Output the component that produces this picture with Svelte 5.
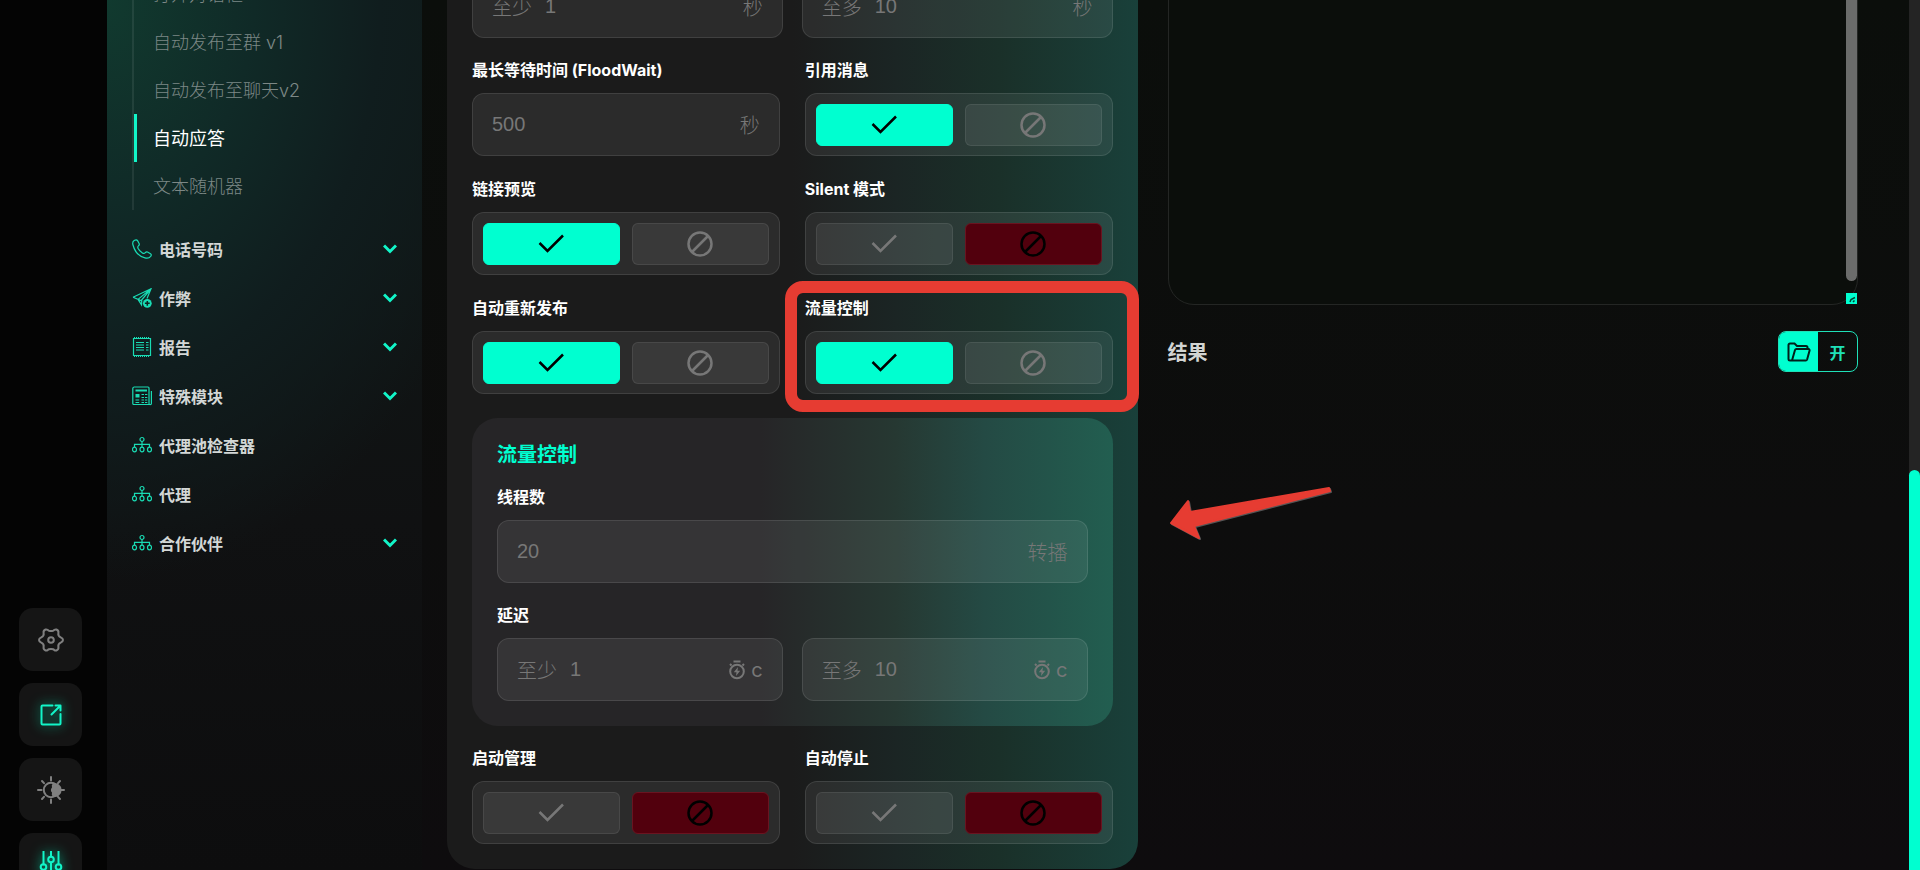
<script lang="ts">
  type Toggle = { id: string; label: string; on: boolean; marked?: boolean };

  const subItems = ['打开对话框', '自动发布至群 v1', '自动发布至聊天v2', '自动应答', '文本随机器'];
  let activeSub = $state(3);

  const menu = [
    { label: '电话号码', icon: 'phone', more: true },
    { label: '作弊', icon: 'plane', more: true },
    { label: '报告', icon: 'report', more: true },
    { label: '特殊模块', icon: 'news', more: true },
    { label: '代理池检查器', icon: 'tree', more: false },
    { label: '代理', icon: 'tree', more: false },
    { label: '合作伙伴', icon: 'tree', more: true },
  ];

  let floodWait = $state('500');
  let threads = $state('20');
  let log = $state('');

  let quote: Toggle = $state({ id: 'quote', label: '引用消息', on: true });
  let options: Toggle[] = $state([
    { id: 'preview', label: '链接预览', on: true },
    { id: 'silent', label: 'Silent 模式', on: false },
    { id: 'repost', label: '自动重新发布', on: true },
    { id: 'flow', label: '流量控制', on: true, marked: true },
  ]);
  let launch: Toggle[] = $state([
    { id: 'manage', label: '启动管理', on: false },
    { id: 'autostop', label: '自动停止', on: false },
  ]);
</script>

{#snippet menuIcon(name: string)}
  <svg class="menu-icon" viewBox="0 0 20 20" aria-hidden="true">
    {#if name === 'phone'}
      <path d="M2.2 1.5C.8 2.300.4 4 1 6c1.600 6 6 11.400 12 12.900 2.300.6 4.300.2 5.700-1.500.9-1.200.7-2-.2-2.600l-3-1.800c-.9-.5-1.500-.3-2.200.6-.8 1-1.700 1.100-2.900.3C8.300 12.600 6.800 10.900 6 9.200c-.5-1.200-.2-1.900.6-2.600.8-.6.9-1.300.5-2.100L5.700 1.900C5 .8 3.600.7 2.200 1.500z" />
    {:else if name === 'plane'}
      <path d="M1 9.200 19 .8l-4 9.700M1 9.200l5 2.200L19 .8 9.200 12.500M6 11.400l3.500 5.400.3-4.300M6.500 11.400l3 1.600" />
      <circle class="fill" cx="15.300" cy="15.300" r="4.400" />
      <path class="cut" d="M15.300 12.900v4.800M12.900 15.300h4.800" />
    {:else if name === 'report'}
      <path d="M1.500 1.500h17v17h-17z" />
      <path stroke-dasharray="1 1" stroke-width="2" d="M2 1h16M2 19h16" />
      <path d="M4 5.500h8M4 8h8M4 10.500h8M4 13h8M14 5.500h2.500M14 8h2.500M14 10.500h2.500M14 13h2.500" />
    {:else if name === 'news'}
      <path d="M2.500 1h13.500a1 1 0 0 1 1 1v15.500c0 1.500 2.400 1.500 2.400 0V5M17 18.500H1.800a1 1 0 0 1-1-1V2.500A1.500 1.500 0 0 1 2.500 1" />
      <path stroke-width="2" d="M3.500 4.500h11.500" />
      <path class="fill" d="M3.500 8h4v3.500h-4z" />
      <path d="M9.500 8.500H12M13 8.500h2.300M9.500 11.500H12M13 11.500h2.300M3.500 14h3.700M9.500 14H12M13 14h2.300M3.500 16.500h3.700M9.500 16.500H12M13 16.500h2.300" />
    {:else}
      <circle cx="10" cy="4.500" r="2" />
      <path d="M10 6.500v5.500M2.500 12V9.300h15V12" />
      <ellipse cx="2.500" cy="14.500" rx="2" ry="2.300" />
      <ellipse cx="10" cy="14.500" rx="2" ry="2.300" />
      <ellipse cx="17.500" cy="14.500" rx="2" ry="2.300" />
    {/if}
  </svg>
{/snippet}

{#snippet toggle(item: Toggle)}
  <div class="field" class:marked={item.marked}>
    <span class="label" id="{item.id}-label">{item.label}</span>
    <div class="toggle" role="group" aria-labelledby="{item.id}-label">
      <button type="button" class="yes" class:selected={item.on} aria-label="开启" aria-pressed={item.on} onclick={() => (item.on = true)}>
        <svg width="28" height="28" viewBox="0 0 28 28"><path d="m2.500 13 8 8L26 5.500" /></svg>
      </button>
      <button type="button" class="no" class:selected={!item.on} aria-label="关闭" aria-pressed={!item.on} onclick={() => (item.on = false)}>
        <svg width="28" height="28" viewBox="0 0 28 28"><circle cx="14" cy="14" r="11.500" /><path d="m6 22 16-16" /></svg>
      </button>
    </div>
  </div>
{/snippet}

{#snippet range(id: string, timer: boolean)}
  <div class="range">
    {#each [['至少', '1'], ['至多', '10']] as [prefix, value], i}
      <div class="box">
        <label for="{id}-{i}">{prefix}</label>
        <input id="{id}-{i}" type="text" {value} />
        {#if timer}
          <svg class="timer" width="18" height="20" viewBox="0 0 18 20" aria-hidden="true">
            <path d="M5.500 1.500h7M2 4l1.500 1.500M16 4l-1.500 1.500" />
            <circle cx="9" cy="11.500" r="6.800" />
            <path class="bolt" d="M10 7 5.800 12.300h2.700L8 16l4.200-5.200H9.500z" />
          </svg>
          <span class="unit latin">c</span>
        {:else}
          <span class="unit">秒</span>
        {/if}
      </div>
    {/each}
  </div>
{/snippet}

<div class="app">
  <aside class="rail">
    <button type="button" aria-label="设置">
      <svg width="28" height="28" viewBox="0 0 28 28">
        <path d="M8.600 3.500c1.800-.5 2 .9 3.300 1.300 1.600.3 2.600.3 4.200 0 1.300-.4 1.500-1.800 3.300-1.300 2 .8 2.400 1.500 2 3.500-.4 1.800.5 3.600 2.300 4.400 2 1 2.300 1.500 2.300 2.600s-.3 1.600-2.300 2.600c-1.800.8-2.700 2.600-2.300 4.400.4 2 0 2.700-2 3.500-1.800.5-2-.9-3.300-1.300-1.600-.3-2.600-.3-4.200 0-1.300.4-1.500 1.800-3.300 1.300-2-.8-2.400-1.500-2-3.500.4-1.800-.5-3.600-2.300-4.400-2-1-2.300-1.500-2.300-2.600s.3-1.600 2.300-2.600C6.100 10.600 7 8.800 6.600 7c-.4-2 0-2.700 2-3.500z" />
        <circle cx="14" cy="14" r="2.800" />
      </svg>
    </button>
    <button type="button" class="lit" aria-label="打开">
      <svg width="28" height="28" viewBox="0 0 28 28"><path d="M15.500 4.500h-10a1 1 0 0 0-1 1v17a1 1 0 0 0 1 1h17a1 1 0 0 0 1-1V13M14.500 13.500l9-9M18.500 4.500h5v5" /></svg>
    </button>
    <button type="button" aria-label="主题">
      <svg width="28" height="28" viewBox="0 0 28 28">
        <circle cx="14" cy="14" r="7.200" />
        <path class="fill" d="M16 7.200a7 7 0 1 1 0 13.600 4 4 0 0 1-1-4.200 4 4 0 0 1 0-5.200 4 4 0 0 1 1-4.200z" />
        <path d="M14 1v3.500M14 23.500V27M1 14h3.500M23.500 14H27M5 5l2 2.200M23 5l-2 2.200M5 23l2-2.200M23 23l-2-2.200" />
      </svg>
    </button>
    <button type="button" class="lit" aria-label="筛选">
      <svg width="28" height="28" viewBox="0 0 28 28"><path d="M6.500 0v13.500M6.500 19.500V27M14 0v5.500M14 11.500V27M21.500 0v13.500M21.500 19.500V27" /><circle cx="6.500" cy="16" r="2.800" /><circle cx="14" cy="8.500" r="2.800" /><circle cx="21.500" cy="16" r="2.800" /></svg>
    </button>
  </aside>

  <nav class="sidebar">
    <ul class="submenu">
      {#each subItems as item, i}
        <li><a href="#sub-{i}" class:active={activeSub === i} onclick={() => (activeSub = i)}>{item}</a></li>
      {/each}
    </ul>
    <ul class="menu">
      {#each menu as item}
        <li>
          <a href="#menu">
            {@render menuIcon(item.icon)}
            <span>{item.label}</span>
            {#if item.more}
              <svg class="chevron" width="14" height="10" viewBox="0 0 14 10" aria-hidden="true"><path d="m1 1.500 6 6 6-6" /></svg>
            {/if}
          </a>
        </li>
      {/each}
    </ul>
  </nav>

  <main>
    <form class="card" onsubmit={(e) => e.preventDefault()}>
      {@render range('interval', false)}

      <div class="grid">
        <div class="field">
          <label class="label" for="flood">最长等待时间 (FloodWait)</label>
          <div class="box">
            <input id="flood" type="text" bind:value={floodWait} />
            <span class="unit">秒</span>
          </div>
        </div>
        {@render toggle(quote)}
        {#each options as item}
          {@render toggle(item)}
        {/each}
      </div>

      <section class="panel">
        <h2>流量控制</h2>
        <label class="label" for="threads">线程数</label>
        <div class="box">
          <input id="threads" type="text" bind:value={threads} />
          <span class="unit">转播</span>
        </div>
        <span class="label delay">延迟</span>
        {@render range('delay', true)}

        <svg class="arrow" width="166" height="56" viewBox="0 0 166 56" aria-hidden="true">
          <path d="M3 37 20 15l2 11L161 2l1 3L26 40l5 12z" />
        </svg>
      </section>

      <div class="grid">
        {#each launch as item}
          {@render toggle(item)}
        {/each}
      </div>
    </form>

    <section class="output">
      <div class="log">
        <textarea aria-label="日志" bind:value={log}></textarea>
        <i class="log-thumb"></i>
        <i class="resizer">
          <svg width="11" height="11" viewBox="0 0 11 11"><path d="m4 9 1-2.500L9 4.500M7 9l1.500-1.500" /></svg>
        </i>
      </div>
      <div class="result">
        <h2>结果</h2>
        <button type="button" class="open">
          <span class="folder">
            <svg width="24" height="20" viewBox="0 0 24 20" aria-hidden="true"><path d="M5 18.500H3A1.500 1.500 0 0 1 1.500 17V3A1.500 1.500 0 0 1 3 1.500h4.500L10 4h9a1.500 1.500 0 0 1 1.500 1.500v1M5 18.500 8 8a1.500 1.500 0 0 1 1.500-1h12A1.200 1.200 0 0 1 22.600 8.500l-2.500 9a1.500 1.500 0 0 1-1.500 1z" /></svg>
          </span>
          <span class="open-text">开</span>
        </button>
      </div>
    </section>
  </main>

  <div class="page-scroll"><i></i></div>
</div>

<style>
  :global(body) {
    background: #0d0d0d;
  }

  .app {
    --accent: #00ffd0;
    --latin: Inter, 'Noto Sans CJK SC', sans-serif;
    --body: 'Liberation Sans', 'Noto Sans CJK SC', sans-serif;
    display: flex;
    height: 100vh;
    overflow: hidden;
    color: #fff;
    font-family: var(--latin);
    background: linear-gradient(#0b0e0b, #0d0d0d 60%, #0e0c0e);
  }

  .app * { box-sizing: border-box; }
  ul { list-style: none; margin: 0; padding: 0; }
  a { color: inherit; text-decoration: none; }
  h2 { margin: 0; }
  button { padding: 0; cursor: pointer; font-family: inherit; }
  svg { fill: none; stroke: currentColor; stroke-width: 2; flex: none; }

  /* icon rail */
  .rail {
    flex: none;
    width: 107px;
    display: flex;
    flex-direction: column;
    justify-content: flex-end;
    gap: 12px;
    padding-left: 19px;
    margin-bottom: -26px;
    background: #040404;
  }
  .rail button {
    display: flex;
    align-items: center;
    justify-content: center;
    flex: none;
    width: 63px;
    height: 63px;
    border: 0;
    border-radius: 14px;
    background: #151515;
    color: #808080;
  }
  .rail svg { stroke-linecap: round; stroke-linejoin: round; }
  .rail .fill { fill: currentColor; stroke: none; }
  .rail .lit { color: #12f5c8; }
  .rail .lit svg { filter: drop-shadow(0 0 6px #00c89a); }

  /* navigation */
  .sidebar {
    flex: none;
    width: 315px;
    padding: 0 25px;
    background:
      radial-gradient(ellipse 420px 580px at 0 0, #113a2f, #102a27 35%, #101d1e 65%, transparent),
      linear-gradient(#101a19, #101112 60%, #0d0d0e);
  }
  .submenu {
    margin-top: -30px;
    border-left: 2px solid rgba(255, 255, 255, 0.08);
  }
  .submenu a {
    display: block;
    height: 48px;
    padding-left: 16px;
    border-left: 3px solid transparent;
    color: #7d8886;
    font-size: 18px;
    font-weight: 300;
    line-height: 50px;
    white-space: nowrap;
  }
  .submenu a.active {
    border-left-color: #12f5c8;
    color: #fff;
    font-weight: 400;
  }
  .menu { margin-top: 14px; }
  .menu a {
    display: flex;
    align-items: center;
    gap: 7px;
    height: 49px;
    color: #d3d7d6;
    font-size: 16px;
    font-weight: 700;
  }
  .menu span { flex: 1; }
  .menu-icon {
    width: 20px;
    height: 20px;
    color: #19dcb4;
    stroke-width: 1.2;
  }
  .menu-icon .fill { fill: currentColor; stroke: none; }
  .menu-icon .cut { stroke: #0e2522; stroke-width: 1.5; }
  .chevron { color: #12f5c8; stroke-width: 3; }

  /* main */
  main {
    flex: 1;
    min-width: 0;
    display: grid;
    grid-template-columns: minmax(0, 1fr) minmax(0, 1fr);
    align-items: start;
    gap: 30px;
    padding: 0 51px 0 25px;
  }
  .card {
    margin-top: -50px;
    padding: 25px;
    border-radius: 0 0 28px 28px;
    background: linear-gradient(90deg, #1b1b1b 0, #1b1b1b 50%, #1b2524 65%, #1a3029 80%, #19403a);
  }
  .grid {
    display: grid;
    grid-template-columns: minmax(0, 1fr) minmax(0, 1fr);
    gap: 21px 25px;
    margin-top: 20px;
  }
  .range {
    display: grid;
    grid-template-columns: minmax(0, 1fr) minmax(0, 1fr);
    gap: 19px;
  }
  .field { position: relative; }
  .label {
    display: block;
    margin-bottom: 11px;
    font-size: 16px;
    font-weight: 700;
    line-height: 24px;
    white-space: nowrap;
  }
  .box,
  .toggle {
    display: flex;
    align-items: center;
    height: 63px;
    border: 1px solid rgba(255, 255, 255, 0.1);
    border-radius: 12px;
    background: rgba(255, 255, 255, 0.07);
  }
  .box {
    padding: 0 19px;
    color: #777;
    font-family: var(--body);
    font-size: 20px;
    font-weight: 300;
  }
  .box label { margin-right: 13px; }
  .box input {
    flex: 1;
    min-width: 0;
    padding: 0;
    border: 0;
    outline: 0;
    background: none;
    color: inherit;
    font: inherit;
  }
  .timer { margin-right: 5px; }
  .timer .bolt { fill: currentColor; stroke: none; }
  .latin {
    font-family: var(--latin);
    font-weight: 400;
  }

  .toggle {
    gap: 12px;
    padding: 0 10px;
  }
  .toggle button {
    flex: 1;
    display: flex;
    align-items: center;
    justify-content: center;
    height: 42px;
    border: 1px solid rgba(255, 255, 255, 0.08);
    border-radius: 6px;
    background: rgba(255, 255, 255, 0.07);
    color: #777;
  }
  .toggle svg { stroke-width: 2.5; }
  .toggle .selected { color: #000; }
  .toggle .yes.selected { background: var(--accent); border-color: var(--accent); }
  .toggle .no.selected { background: #52000d; border-color: #6a1420; }

  .marked::after {
    content: '';
    position: absolute;
    inset: -15px -26px -18px -20px;
    border: 12px solid #e63c32;
    border-radius: 18px;
    pointer-events: none;
  }

  .panel {
    position: relative;
    margin-top: 24px;
    padding: 25px;
    border-radius: 26px;
    background: linear-gradient(90deg, #262527 0, #262527 45%, #263832 66%, #244a44 80%, #225e50);
  }
  .panel h2 {
    margin-bottom: 18px;
    color: var(--accent);
    font-size: 20px;
    font-weight: 700;
    line-height: 24px;
  }
  .delay { margin-top: 20px; }
  .arrow {
    position: absolute;
    left: calc(100% + 55px);
    top: 68px;
    stroke: none;
  }
  .arrow path {
    fill: #e63c32;
    stroke: #e63c32;
    stroke-linejoin: round;
    filter: drop-shadow(1px 1px 0 #555);
  }

  /* output */
  .log { position: relative; }
  .log textarea {
    display: block;
    width: 100%;
    height: 345px;
    margin-top: -40px;
    border: 1px solid #242624;
    border-radius: 26px;
    outline: 0;
    background: #0b0e0b;
    color: #ccc;
    resize: none;
  }
  .log-thumb {
    position: absolute;
    top: -8px;
    right: 1px;
    bottom: 24px;
    width: 11px;
    border-radius: 6px;
    background: #6b6c6b;
  }
  .resizer {
    position: absolute;
    right: 1px;
    bottom: 1px;
    width: 11px;
    height: 11px;
    background: var(--accent);
    color: #043;
  }
  .resizer svg { display: block; stroke-width: 1.5; }
  .result {
    display: flex;
    align-items: center;
    justify-content: space-between;
    margin-top: 26px;
  }
  .result h2 {
    color: #d2d4d2;
    font-size: 20px;
    font-weight: 700;
  }
  .open {
    display: flex;
    width: 80px;
    height: 41px;
    overflow: hidden;
    border: 1px solid #1fe0b8;
    border-radius: 8px;
    background: none;
    color: #1fe0b8;
    font-size: 16px;
    font-weight: 700;
  }
  .folder,
  .open-text {
    flex: 1;
    display: flex;
    align-items: center;
    justify-content: center;
    height: 100%;
  }
  .folder { background: var(--accent); color: #00201a; }

  .page-scroll {
    flex: none;
    display: flex;
    align-items: flex-end;
    width: 11px;
    background: #242424;
  }
  .page-scroll i {
    width: 100%;
    height: 46%;
    border-radius: 6px 6px 0 0;
    background: var(--accent);
  }
</style>
